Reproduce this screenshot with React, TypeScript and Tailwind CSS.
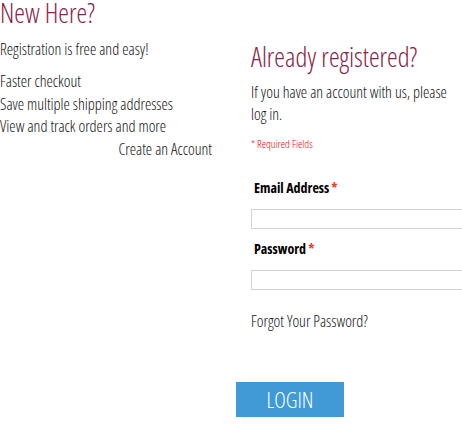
export default function App() {
  const cond = "[font-family:'Open_Sans',sans-serif] [font-stretch:75%]";
  return (
    <div className={`w-[462px] h-[427px] overflow-hidden bg-white text-[#111] ${cond}`}>
      <div className="flex">
        {/* New customer */}
        <div className="w-[212px] shrink-0 [font-weight:350]">
          <h2 className="text-[27px] leading-[25px] text-[#8b2346] [font-weight:350]">New Here?</h2>
          <p className="mt-[13px] text-[16px] leading-[22px]">Registration is free and easy!</p>
          <ul className="mt-[10px] text-[16px] leading-[22.5px]">
            <li>Faster checkout</li>
            <li>Save multiple shipping addresses</li>
            <li>View and track orders and more</li>
          </ul>
          <div className="text-right text-[16px] leading-[22px]">Create an Account</div>
        </div>

        {/* Login */}
        <div className="ml-[39px] w-[260px] shrink-0 pt-[42px]">
          <h2 className="text-[27px] leading-[30px] text-[#8b2346] [font-weight:350]">Already registered?</h2>
          <p className="mt-[9px] w-[205px] text-[16px] leading-[22px] [font-weight:350]">
            If you have an account with us, please log in.
          </p>
          <p className="mt-[12px] text-[11px] leading-[14px] text-[#e00] [font-weight:350]">* Required Fields</p>

          <label className="mt-[27px] ml-[3px] block text-[14px] leading-[20px] font-bold text-black">
            Email Address<span className="ml-[2px] text-[#e8411e]">*</span>
          </label>
          <input className="mt-[11px] block h-[20px] w-[240px] border border-[#d4d4d4] bg-white" />

          <label className="mt-[10px] ml-[3px] block text-[14px] leading-[20px] font-bold text-black">
            Password<span className="ml-[2px] text-[#e8411e]">*</span>
          </label>
          <input type="password" className="mt-[11px] block h-[20px] w-[240px] border border-[#d4d4d4] bg-white" />

          <p className="mt-[21px] text-[16px] leading-[20px] [font-weight:350]">Forgot Your Password?</p>
        </div>
      </div>
      <div className="pl-[236px] mt-[51px]">
        <button className="w-[108px] h-[35px] bg-[#3f9ad6] text-white text-[22px] leading-[35px] font-light">LOGIN</button>
      </div>
    </div>
  );
}
